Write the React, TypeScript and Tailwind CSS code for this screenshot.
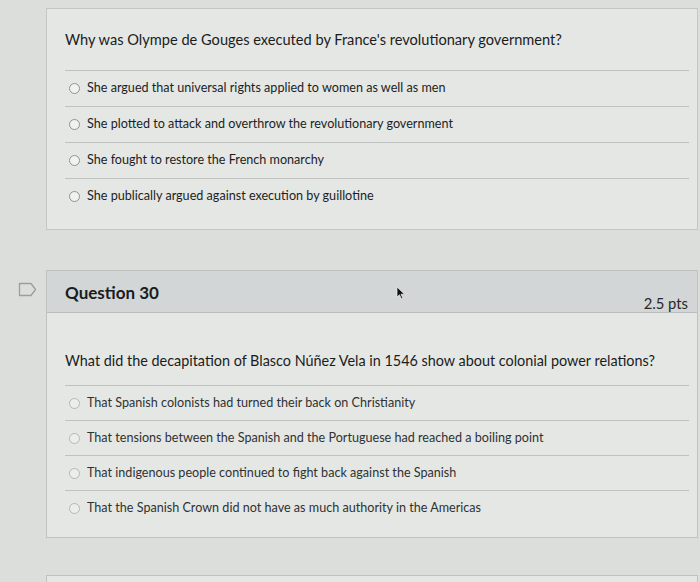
const Q1 = [
  'She argued that universal rights applied to women as well as men',
  'She plotted to attack and overthrow the revolutionary government',
  'She fought to restore the French monarchy',
  'She publically argued against execution by guillotine',
];

const Q2 = [
  'That Spanish colonists had turned their back on Christianity',
  'That tensions between the Spanish and the Portuguese had reached a boiling point',
  'That indigenous people continued to fight back against the Spanish',
  'That the Spanish Crown did not have as much authority in the Americas',
];

function Radio({ faded }: { faded?: boolean }) {
  return (
    <span
      className={
        'w-[11px] h-[11px] rounded-full border shrink-0 ' +
        (faded ? 'border-[#b4b8b6] bg-[#eceeeb]' : 'border-[#8f9392] bg-[#f1f2f0]')
      }
    />
  );
}

function Answers({ items, rowH, faded }: { items: string[]; rowH: string; faded?: boolean }) {
  return (
    <div className="mr-[8px]">
      {items.map((a) => (
        <div key={a} className={`${rowH} border-t border-[#bfc2c0] flex items-center gap-[7px] pl-[4px]`}>
          <Radio faded={faded} />
          <span className={'text-[12.6px] ' + (faded ? 'text-[#2f3233]' : 'text-[#1c1e1f]')}>{a}</span>
        </div>
      ))}
    </div>
  );
}

function Flag() {
  return (
    <svg width="19" height="15" viewBox="0 0 19 15" fill="none">
      <path d="M1.5 1.5 H13 L17.5 7.5 L13 13.5 H1.5 Z" stroke="#9a9e9d" strokeWidth="1.3" strokeLinejoin="round" />
    </svg>
  );
}

export default function App() {
  return (
    <div
      className="relative w-[700px] h-[582px] overflow-hidden bg-[#dcdedb] text-[#1a1c1d]"
      style={{ fontFamily: 'Lato, "Open Sans", sans-serif' }}
    >
      {/* Question 29 body (header scrolled off) */}
      <div className="flex pt-[8px]">
        <div className="w-[46px] shrink-0" />
        <div className="w-[652px] h-[222px] border border-[#c3c6c4] bg-[#e5e7e4] pl-[18px] flex flex-col">
          <p className="mt-[21px] text-[14.6px] leading-[20px]">
            Why was Olympe de Gouges executed by France's revolutionary government?
          </p>
          <div className="mt-[20px]">
            <Answers items={Q1} rowH="h-[36px]" />
          </div>
        </div>
      </div>

      {/* Question 30 */}
      <div className="flex mt-[40px]">
        <div className="w-[46px] shrink-0 pl-[18px] pt-[12px]">
          <Flag />
        </div>
        <div className="w-[652px] h-[268px] border border-[#bfc2c0] bg-[#e5e7e4] flex flex-col">
          <div className="h-[42px] shrink-0 bg-[#d2d6d7] border-b border-[#b9bdbd] flex justify-between pl-[18px] pr-[9px]">
            <h2 className="mt-[11px] text-[17px] leading-[22px] font-bold">Question 30</h2>
            <span className="mt-[23px] text-[14.8px] leading-[18px] text-[#262829]">2.5 pts</span>
          </div>
          <div className="pl-[18px]">
            <p className="mt-[38px] text-[14.4px] leading-[20px]">
              What did the decapitation of Blasco Núñez Vela in 1546 show about colonial power relations?
            </p>
            <div className="mt-[14px]">
              <Answers items={Q2} rowH="h-[35px]" faded />
            </div>
          </div>
        </div>
      </div>

      {/* next question, just peeking in */}
      <div className="flex mt-[37px]">
        <div className="w-[46px] shrink-0" />
        <div className="w-[652px] h-[20px] border border-[#bfc2c0] bg-[#e5e7e4]" />
      </div>

      {/* mouse pointer */}
      <svg className="absolute left-[396px] top-[286px]" width="10" height="14" viewBox="0 0 10 14">
        <path d="M1 1 L1 11 L3.5 8.8 L5.3 12.8 L6.8 12.1 L5 8.2 L8.5 8.2 Z" fill="#111" stroke="#f4f4f4" strokeWidth="0.7" />
      </svg>
    </div>
  );
}
